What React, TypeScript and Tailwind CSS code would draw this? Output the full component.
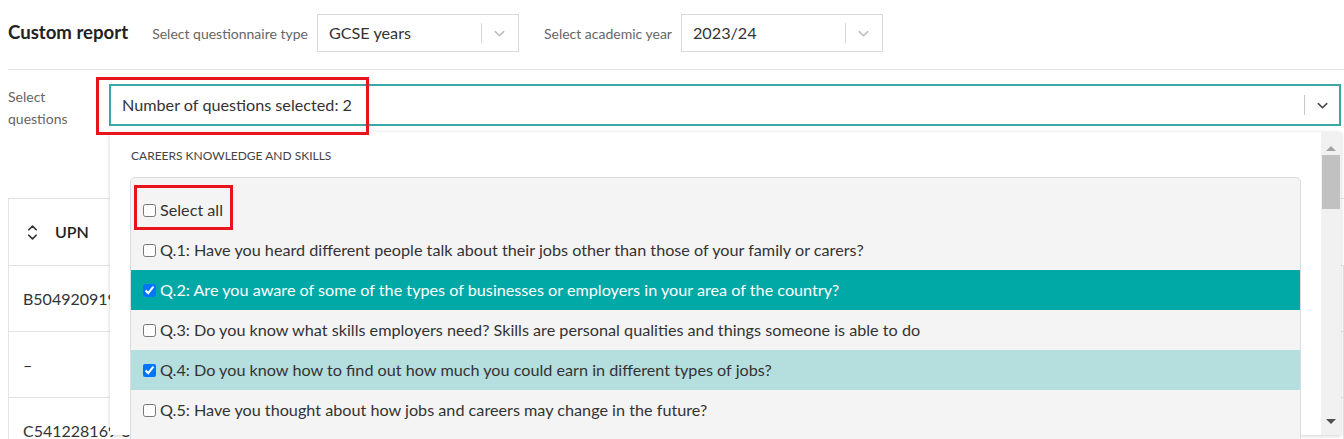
import React from "react";

const ChevronDown = ({ className = "" }: { className?: string }) => (
  <svg viewBox="0 0 16 16" className={className} fill="none" stroke="currentColor" strokeWidth="1.6" strokeLinecap="round" strokeLinejoin="round">
    <path d="M3.5 6l4.5 4.5L12.5 6" />
  </svg>
);

const Select = ({ value, width }: { value: string; width: string }) => (
  <div className={`flex items-center h-[38px] border border-[#d9d9d9] bg-white ${width}`}>
    <div className="flex-1 pl-[11px] text-[16.2px] text-[#333]">{value}</div>
    <div className="w-px h-[20px] bg-[#d6d6d6]" />
    <div className="w-[36px] flex justify-center text-[#bdbdbd]">
      <ChevronDown className="w-[15px] h-[15px]" />
    </div>
  </div>
);

const questions = [
  { label: "Select all", checked: false, style: "text-[#333]" },
  { label: "Q.1: Have you heard different people talk about their jobs other than those of your family or carers?", checked: false, style: "text-[#333]" },
  { label: "Q.2: Are you aware of some of the types of businesses or employers in your area of the country?", checked: true, style: "bg-[#00a8a6] text-white" },
  { label: "Q.3: Do you know what skills employers need? Skills are personal qualities and things someone is able to do", checked: false, style: "text-[#333]" },
  { label: "Q.4: Do you know how to find out how much you could earn in different types of jobs?", checked: true, style: "bg-[#b5dedf] text-[#333]" },
  { label: "Q.5: Have you thought about how jobs and careers may change in the future?", checked: false, style: "text-[#333]" },
];

const colWidths = ["w-[152px]", "w-[132px]", "w-[140px]", "w-[143px]", "w-[213px]", "w-[216px]", "w-[216px]", "w-[124px]"];

export default function App() {
  const rows = [
    ["B504920919", "", "", "", "", "", "", ""],
    ["–", "", "", "", "", "", "", ""],
    ["C541228169 354", "Bailey", "Henry", "Year 11", "EFH", "N", "N", "N"],
  ];
  return (
    <div className="relative w-[1344px] h-[439px] overflow-hidden bg-white font-['Lato',sans-serif] text-[#333]">
      {/* Header */}
      <div className="ml-2 pt-[14px] pb-[17px] border-b border-[#e3e3e3] flex items-center">
        <div className="text-[18.6px] font-bold text-[#222] mr-[24px]">Custom report</div>
        <div className="text-[14px] text-[#666] mr-[9px]">Select questionnaire type</div>
        <Select value="GCSE years" width="w-[202px]" />
        <div className="text-[14px] text-[#666] ml-[25px] mr-[9px]">Select academic year</div>
        <Select value="2023/24" width="w-[202px]" />
      </div>

      {/* Question selector row */}
      <div className="flex mt-[14px] ml-2">
        <div className="w-[101px] text-[14px] text-[#666] leading-[22px] pt-[2px]">
          Select<br />questions
        </div>
        <div className="w-[1232px] h-[42px] border-2 border-[#3aa9a5] flex items-center bg-white">
          <div className="flex-1 pl-[11px] text-[16.2px] text-[#333]">Number of questions selected: 2</div>
          <div className="w-px h-[20px] bg-[#c8c8c8]" />
          <div className="w-[34px] flex justify-center text-[#444]">
            <ChevronDown className="w-[15px] h-[15px]" />
          </div>
        </div>
      </div>

      {/* Table behind */}
      <div className="ml-2 mt-[68px] border-l border-t border-[#e3e3e3]">
        <div className="flex h-[67px] border-b border-[#e3e3e3] items-center">
          <div className="flex items-center pl-[18px] gap-[17px] w-[152px]">
            <svg viewBox="0 0 12 18" className="w-[11px] h-[17px]" fill="none" stroke="#333" strokeWidth="1.8" strokeLinecap="round" strokeLinejoin="round">
              <path d="M2 6l4-4 4 4" />
              <path d="M2 12l4 4 4-4" />
            </svg>
            <span className="text-[16px] font-semibold text-[#222]">UPN</span>
          </div>
        </div>
        {rows.map((r, i) => (
          <div key={i} className="flex h-[66px] border-b border-[#e3e3e3]">
            {r.map((c, j) => (
              <div key={j} className={`${colWidths[j]} border-r border-[#e3e3e3] flex items-center pl-[14px] text-[16px] text-[#333] whitespace-nowrap overflow-hidden`}>
                {c}
              </div>
            ))}
          </div>
        ))}
      </div>

      {/* Dropdown panel */}
      <div className="absolute left-[110px] top-[132px] w-[1231px] h-[303px] bg-white shadow-[0_1px_4px_rgba(0,0,0,0.18)] flex">
        <div className="flex-1 pl-[20px] pr-[20px]">
          <div className="h-[45px] flex items-center pl-[1px] pt-[3px] text-[12px] text-[#444] uppercase">
            Careers knowledge and skills
          </div>
          <div className="border border-[#dcdcdc] rounded-[5px] bg-[#f4f4f4] pt-[12px] h-[300px] overflow-hidden">
            {questions.map((q, i) => (
              <div key={i} className={`h-[40px] flex items-center pl-[12px] text-[16.2px] ${q.style}`}>
                <input type="checkbox" defaultChecked={q.checked} className="w-[13px] h-[13px] m-0 mr-[4px] accent-[#0075ff]" readOnly />
                <span>{q.label}</span>
              </div>
            ))}
          </div>
        </div>
        {/* scrollbar */}
        <div className="w-[20px] h-full bg-[#f1f1f1] flex flex-col items-center">
          <div className="h-[22px] flex items-end pb-[3px]">
            <div className="w-0 h-0 border-l-[5px] border-r-[5px] border-b-[5px] border-l-transparent border-r-transparent border-b-[#a3a3a3]" />
          </div>
          <div className="w-[18px] h-[54px] bg-[#c1c1c1] mt-[1px]" />
          <div className="flex-1" />
          <div className="h-[22px] flex items-start pt-[6px]">
            <div className="w-0 h-0 border-l-[5px] border-r-[5px] border-t-[5px] border-l-transparent border-r-transparent border-t-[#505050]" />
          </div>
        </div>
      </div>

      {/* Red annotation boxes */}
      <div className="absolute left-[96px] top-[77px] w-[273px] h-[58px] border-[3px] border-[#e8141b]" />
      <div className="absolute left-[134px] top-[185px] w-[99px] h-[45px] border-[3px] border-[#e8141b]" />
    </div>
  );
}
